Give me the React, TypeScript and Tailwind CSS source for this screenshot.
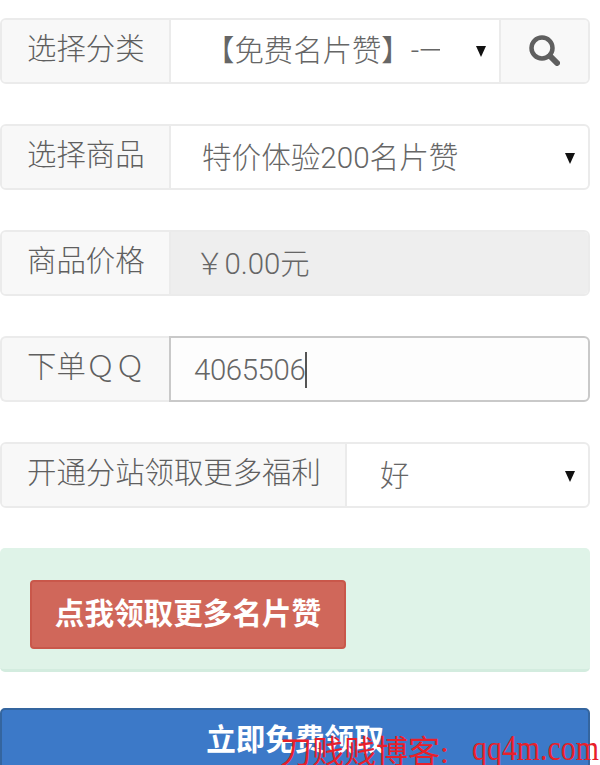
const sans = "font-['Roboto','Noto_Sans_CJK_SC',sans-serif]";

function Arrow() {
  return (
    <svg className="w-[12px] h-[12px] shrink-0 -mt-[1px]" viewBox="0 0 12 12">
      <path d="M1 1h10L6 12z" fill="#111" />
    </svg>
  );
}

function Row({ label, width = 'w-[169px]', children }: { label: string; width?: string; children: React.ReactNode }) {
  return (
    <div className="flex h-[66px] w-[590px] rounded-[6px] border-2 border-[#ebebeb] overflow-hidden">
      <div className={`${width} shrink-0 bg-[#f8f8f8] pl-[25px] pt-[9px] text-[29.4px] leading-[40px] text-[#5f5f5f] font-light whitespace-nowrap border-r-2 border-[#ebebeb]`}>
        {label}
      </div>
      {children}
    </div>
  );
}

export default function App() {
  return (
    <div className={`relative h-[765px] w-[600px] overflow-hidden bg-white pt-[18px] ${sans}`}>
      <div className="flex flex-col gap-[40px]">
        <Row label="选择分类">
          <div className="flex-1 flex items-center pl-[34px] pr-[12px] text-[29.4px] text-[#666] font-light">
            <span className="w-[235px] overflow-hidden whitespace-nowrap">【免费名片赞】-一一一</span>
            <span className="ml-auto"><Arrow /></span>
          </div>
          <div className="w-[89px] shrink-0 flex items-center justify-center bg-[#f8f8f8] border-l-2 border-[#ebebeb]">
            <svg className="w-[31px] h-[31px] -mt-[2px]" viewBox="0 0 31 31" fill="none" stroke="#5f5f5f">
              <circle cx="13" cy="13" r="10.5" strokeWidth="4.5" />
              <path d="M21 21l7 7" strokeWidth="6" strokeLinecap="round" />
            </svg>
          </div>
        </Row>
        <Row label="选择商品">
          <div className="flex-1 flex items-center pl-[31px] pr-[12px] pt-[3px] text-[29.6px] text-[#666] font-light">
            <span>特价体验200名片赞</span>
            <span className="ml-auto"><Arrow /></span>
          </div>
        </Row>
        <Row label="商品价格">
          <div className="flex-1 flex items-center pl-[24px] pt-[3px] bg-[#eeeeee] text-[29.4px] text-[#666] font-light">
            ￥0.00元
          </div>
        </Row>
        <div className="flex h-[66px] w-[590px]">
          <div className="w-[169px] shrink-0 rounded-l-[6px] border-2 border-r-0 border-[#ebebeb] bg-[#f8f8f8] pl-[25px] pt-[9px] text-[29.4px] leading-[40px] text-[#5f5f5f] font-light whitespace-nowrap">
            下单ＱＱ
          </div>
          <div className="flex-1 flex items-center pl-[23px] pt-[2px] rounded-r-[6px] border-2 border-[#c9c9c9] bg-[#fdfdfd] text-[29.4px] text-[#666] font-light tracking-[-0.4px]">
            <span className="border-r-2 border-[#555] leading-[36px]">4065506</span>
          </div>
        </div>
        <Row label="开通分站领取更多福利" width="w-[345px]">
          <div className="flex-1 flex items-center pl-[33px] pr-[12px] pt-[2px] text-[29.4px] text-[#666] font-light">
            <span>好</span>
            <span className="ml-auto"><Arrow /></span>
          </div>
        </Row>
      </div>

      <div className="mt-[40px] h-[124px] w-[590px] rounded-[5px] bg-[#dff3e8] border-b-[3px] border-[#d3ecdf] pl-[30px] pt-[32px]">
        <div className="flex items-center justify-center w-[316px] h-[69px] rounded-[4px] bg-[#d0675a] border-2 border-[#c9574a] text-[29.6px] font-bold text-white">
          点我领取更多名片赞
        </div>
      </div>

      <div className="mt-[36px] h-[70px] w-[590px] rounded-t-[5px] bg-[#3c79c8] border-2 border-[#34659f] text-center text-[29.6px] font-bold text-white pt-[8px] leading-[44px]">
        立即免费领取
      </div>

      <div className="absolute left-[280px] top-[730px] flex whitespace-nowrap font-['Liberation_Serif','Noto_Sans_CJK_SC',serif] text-[32px] leading-[44px] text-[#e8202a]">
        <span className="w-[192px]">刀贱贱博客:</span>
        <span className="inline-block -mt-[4px] origin-left scale-x-[0.83] text-[36px]">qq4m.com</span>
      </div>
    </div>
  );
}
